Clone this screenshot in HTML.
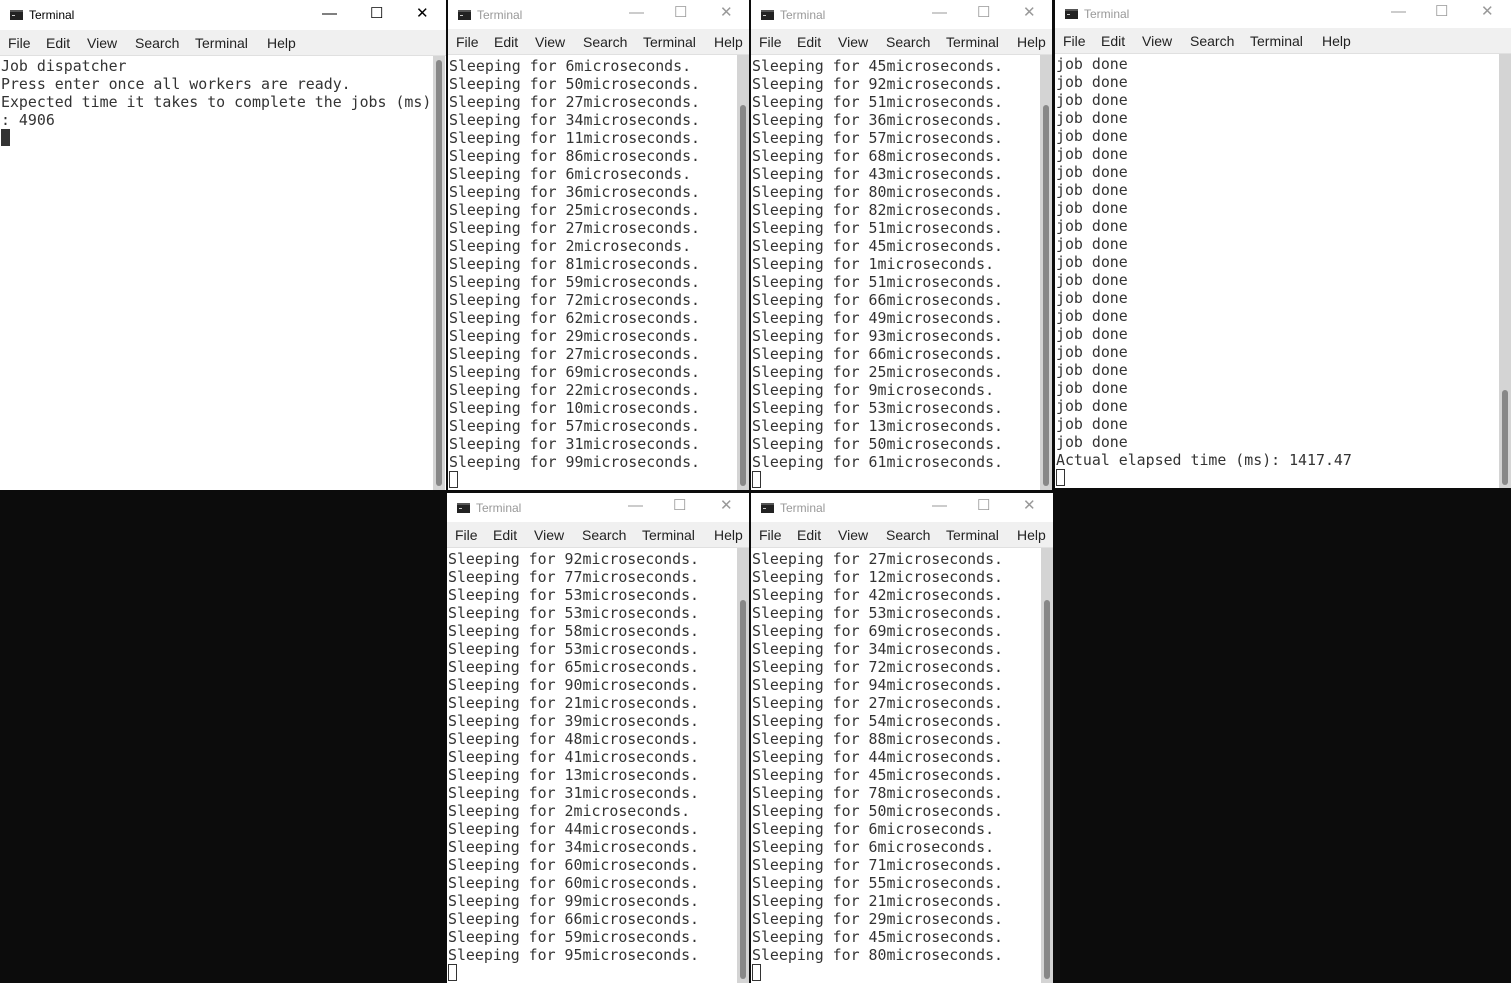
<!DOCTYPE html>
<html><head><meta charset="utf-8"><style>
*{margin:0;padding:0;box-sizing:border-box}
body{width:1511px;height:983px;background:#0c0c0c;position:relative;overflow:hidden;font-family:"Liberation Sans",sans-serif}
.w{position:absolute;background:#fff;overflow:hidden}
.tb{position:absolute;left:0;right:0;top:0;background:#fff;font-size:12px;color:#999}
.tb.act{color:#000}
.tb .ic{position:absolute;left:10px;width:13px;height:10px;background:#222;border-top:2px solid #555}
.tb .ic:after{content:"";position:absolute;left:2px;top:1px;width:3px;height:2px;border-bottom:1px solid #ccc}
.tb .t{position:absolute;left:29px}
.tb .c{position:absolute;font-size:15px;color:#999}
.tb.act .c{color:#000}
.mn{position:absolute;left:0;right:0;background:#f0f0f0;font-size:14px;color:#222;border-bottom:1px solid #e0e0e0}
.mn span{position:absolute}
.ct{position:absolute;left:1px;font-family:"DejaVu Sans Mono","Liberation Mono",monospace;font-size:14.9px;line-height:18px;color:#333;white-space:pre}
.sb{position:absolute;right:0;width:12px;background:#d4d4d4}
.th{position:absolute;left:3px;width:6px;background:#888;border-radius:3px}
.cur{display:inline-block;width:9px;height:17px;border:1px solid #333;vertical-align:top}
.cur.f{background:#333}
</style></head><body>

<!-- Window 1 -->
<div class="w" style="left:0;top:0;width:446px;height:490px">
 <div class="tb act" style="height:30px"><div class="ic" style="top:10px"></div><div class="t" style="top:8px">Terminal</div>
  <div class="c" style="left:322px;top:5px">—</div><div class="c" style="left:370px;top:4px">☐</div><div class="c" style="left:416px;top:4px">✕</div></div>
 <div class="mn" style="top:30px;height:26px"><span style="left:8px;top:5px">File</span><span style="left:46px;top:5px">Edit</span><span style="left:87px;top:5px">View</span><span style="left:135px;top:5px">Search</span><span style="left:195px;top:5px">Terminal</span><span style="left:267px;top:5px">Help</span></div>
 <div class="ct" style="top:57px">Job dispatcher
Press enter once all workers are ready.
Expected time it takes to complete the jobs (ms)
: 4906
<span class="cur f"></span></div>
 <div class="sb" style="top:56px;bottom:0;right:1px"><div class="th" style="top:4px;bottom:4px"></div></div>
</div>

<!-- Window 2 -->
<div class="w" style="left:448px;top:0;width:301px;height:490px">
 <div class="tb" style="height:29px"><div class="ic" style="top:10px"></div><div class="t" style="top:8px">Terminal</div>
  <div class="c" style="left:181px;top:4px">—</div><div class="c" style="left:226px;top:3px">☐</div><div class="c" style="left:272px;top:3px">✕</div></div>
 <div class="mn" style="top:29px;height:26px"><span style="left:8px;top:5px">File</span><span style="left:46px;top:5px">Edit</span><span style="left:87px;top:5px">View</span><span style="left:135px;top:5px">Search</span><span style="left:195px;top:5px">Terminal</span><span style="left:266px;top:5px">Help</span></div>
 <div class="ct" style="top:57px">Sleeping for 6microseconds.
Sleeping for 50microseconds.
Sleeping for 27microseconds.
Sleeping for 34microseconds.
Sleeping for 11microseconds.
Sleeping for 86microseconds.
Sleeping for 6microseconds.
Sleeping for 36microseconds.
Sleeping for 25microseconds.
Sleeping for 27microseconds.
Sleeping for 2microseconds.
Sleeping for 81microseconds.
Sleeping for 59microseconds.
Sleeping for 72microseconds.
Sleeping for 62microseconds.
Sleeping for 29microseconds.
Sleeping for 27microseconds.
Sleeping for 69microseconds.
Sleeping for 22microseconds.
Sleeping for 10microseconds.
Sleeping for 57microseconds.
Sleeping for 31microseconds.
Sleeping for 99microseconds.
<span class="cur"></span></div>
 <div class="sb" style="top:55px;bottom:0"><div class="th" style="top:50px;bottom:4px"></div></div>
</div>

<!-- Window 3 -->
<div class="w" style="left:751px;top:0;width:301px;height:490px">
 <div class="tb" style="height:29px"><div class="ic" style="top:10px"></div><div class="t" style="top:8px">Terminal</div>
  <div class="c" style="left:181px;top:4px">—</div><div class="c" style="left:226px;top:3px">☐</div><div class="c" style="left:272px;top:3px">✕</div></div>
 <div class="mn" style="top:29px;height:26px"><span style="left:8px;top:5px">File</span><span style="left:46px;top:5px">Edit</span><span style="left:87px;top:5px">View</span><span style="left:135px;top:5px">Search</span><span style="left:195px;top:5px">Terminal</span><span style="left:266px;top:5px">Help</span></div>
 <div class="ct" style="top:57px">Sleeping for 45microseconds.
Sleeping for 92microseconds.
Sleeping for 51microseconds.
Sleeping for 36microseconds.
Sleeping for 57microseconds.
Sleeping for 68microseconds.
Sleeping for 43microseconds.
Sleeping for 80microseconds.
Sleeping for 82microseconds.
Sleeping for 51microseconds.
Sleeping for 45microseconds.
Sleeping for 1microseconds.
Sleeping for 51microseconds.
Sleeping for 66microseconds.
Sleeping for 49microseconds.
Sleeping for 93microseconds.
Sleeping for 66microseconds.
Sleeping for 25microseconds.
Sleeping for 9microseconds.
Sleeping for 53microseconds.
Sleeping for 13microseconds.
Sleeping for 50microseconds.
Sleeping for 61microseconds.
<span class="cur"></span></div>
 <div class="sb" style="top:55px;bottom:0"><div class="th" style="top:50px;bottom:4px"></div></div>
</div>

<!-- Window 4 -->
<div class="w" style="left:1055px;top:0;width:456px;height:488px">
 <div class="tb" style="height:28px"><div class="ic" style="top:9px"></div><div class="t" style="top:7px">Terminal</div>
  <div class="c" style="left:336px;top:3px">—</div><div class="c" style="left:380px;top:2px">☐</div><div class="c" style="left:426px;top:2px">✕</div></div>
 <div class="mn" style="top:28px;height:26px"><span style="left:8px;top:5px">File</span><span style="left:46px;top:5px">Edit</span><span style="left:87px;top:5px">View</span><span style="left:135px;top:5px">Search</span><span style="left:195px;top:5px">Terminal</span><span style="left:267px;top:5px">Help</span></div>
 <div class="ct" style="top:55px">job done
job done
job done
job done
job done
job done
job done
job done
job done
job done
job done
job done
job done
job done
job done
job done
job done
job done
job done
job done
job done
job done
Actual elapsed time (ms): 1417.47
<span class="cur"></span></div>
 <div class="sb" style="top:54px;bottom:0"><div class="th" style="top:336px;bottom:3px"></div></div>
</div>

<!-- Window 5 -->
<div class="w" style="left:447px;top:493px;width:302px;height:490px">
 <div class="tb" style="height:29px"><div class="ic" style="top:10px"></div><div class="t" style="top:8px">Terminal</div>
  <div class="c" style="left:181px;top:4px">—</div><div class="c" style="left:226px;top:3px">☐</div><div class="c" style="left:273px;top:3px">✕</div></div>
 <div class="mn" style="top:29px;height:26px"><span style="left:8px;top:5px">File</span><span style="left:46px;top:5px">Edit</span><span style="left:87px;top:5px">View</span><span style="left:135px;top:5px">Search</span><span style="left:195px;top:5px">Terminal</span><span style="left:267px;top:5px">Help</span></div>
 <div class="ct" style="top:57px">Sleeping for 92microseconds.
Sleeping for 77microseconds.
Sleeping for 53microseconds.
Sleeping for 53microseconds.
Sleeping for 58microseconds.
Sleeping for 53microseconds.
Sleeping for 65microseconds.
Sleeping for 90microseconds.
Sleeping for 21microseconds.
Sleeping for 39microseconds.
Sleeping for 48microseconds.
Sleeping for 41microseconds.
Sleeping for 13microseconds.
Sleeping for 31microseconds.
Sleeping for 2microseconds.
Sleeping for 44microseconds.
Sleeping for 34microseconds.
Sleeping for 60microseconds.
Sleeping for 60microseconds.
Sleeping for 99microseconds.
Sleeping for 66microseconds.
Sleeping for 59microseconds.
Sleeping for 95microseconds.
<span class="cur"></span></div>
 <div class="sb" style="top:55px;bottom:0"><div class="th" style="top:52px;bottom:4px"></div></div>
</div>

<!-- Window 6 -->
<div class="w" style="left:751px;top:493px;width:302px;height:490px">
 <div class="tb" style="height:29px"><div class="ic" style="top:10px"></div><div class="t" style="top:8px">Terminal</div>
  <div class="c" style="left:181px;top:4px">—</div><div class="c" style="left:226px;top:3px">☐</div><div class="c" style="left:272px;top:3px">✕</div></div>
 <div class="mn" style="top:29px;height:26px"><span style="left:8px;top:5px">File</span><span style="left:46px;top:5px">Edit</span><span style="left:87px;top:5px">View</span><span style="left:135px;top:5px">Search</span><span style="left:195px;top:5px">Terminal</span><span style="left:266px;top:5px">Help</span></div>
 <div class="ct" style="top:57px">Sleeping for 27microseconds.
Sleeping for 12microseconds.
Sleeping for 42microseconds.
Sleeping for 53microseconds.
Sleeping for 69microseconds.
Sleeping for 34microseconds.
Sleeping for 72microseconds.
Sleeping for 94microseconds.
Sleeping for 27microseconds.
Sleeping for 54microseconds.
Sleeping for 88microseconds.
Sleeping for 44microseconds.
Sleeping for 45microseconds.
Sleeping for 78microseconds.
Sleeping for 50microseconds.
Sleeping for 6microseconds.
Sleeping for 6microseconds.
Sleeping for 71microseconds.
Sleeping for 55microseconds.
Sleeping for 21microseconds.
Sleeping for 29microseconds.
Sleeping for 45microseconds.
Sleeping for 80microseconds.
<span class="cur"></span></div>
 <div class="sb" style="top:55px;bottom:0"><div class="th" style="top:52px;bottom:4px"></div></div>
</div>

</body></html>
